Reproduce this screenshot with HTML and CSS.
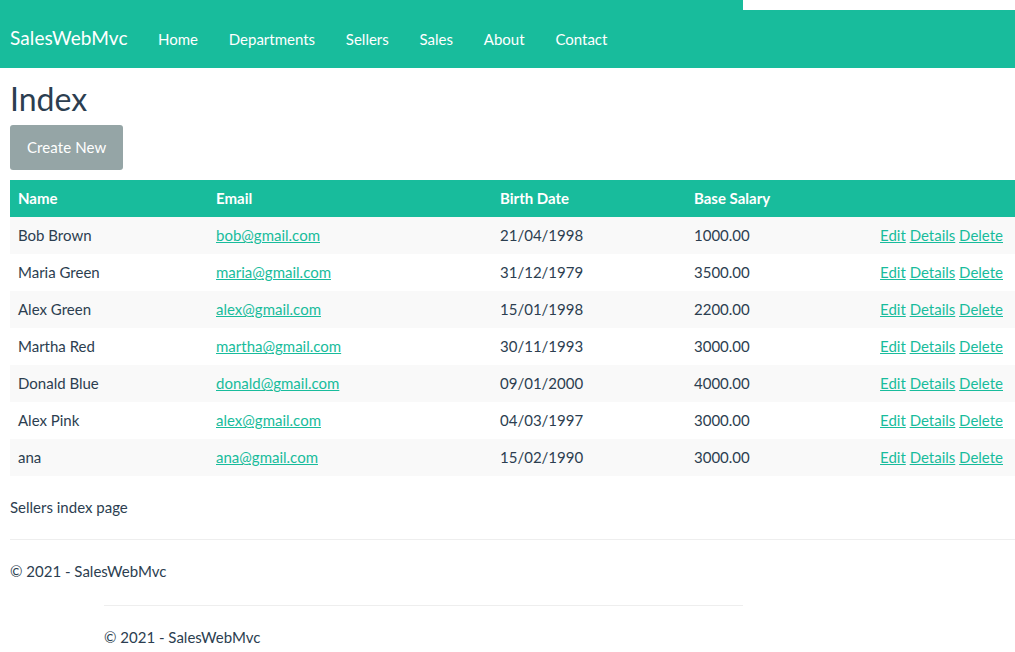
FILE: index.html
```html
<!DOCTYPE html>
<html lang="en">
<head>
<meta charset="utf-8">
<title>Index - SalesWebMvc</title>
<link rel="stylesheet" href="styles.css">
</head>
<body>
<nav class="navbar">
  <a class="brand" href="#">SalesWebMvc</a>
  <ul class="nav">
    <li><a href="#">Home</a></li>
    <li><a href="#">Departments</a></li>
    <li><a href="#">Sellers</a></li>
    <li><a href="#">Sales</a></li>
    <li><a href="#">About</a></li>
    <li><a href="#">Contact</a></li>
  </ul>
  <div class="notch"></div>
</nav>
<main class="container">
  <h2 class="title">Index</h2>
  <a class="btn" href="#">Create New</a>
  <table class="table">
    <colgroup>
      <col class="c1"><col class="c2"><col class="c3"><col class="c4"><col class="c5">
    </colgroup>
    <thead>
      <tr><th>Name</th><th>Email</th><th>Birth Date</th><th>Base Salary</th><th></th></tr>
    </thead>
    <tbody>
      <tr><td>Bob Brown</td><td><a href="#">bob@gmail.com</a></td><td>21/04/1998</td><td>1000.00</td><td class="actions"><a href="#">Edit</a> <a href="#">Details</a> <a href="#">Delete</a></td></tr>
      <tr><td>Maria Green</td><td><a href="#">maria@gmail.com</a></td><td>31/12/1979</td><td>3500.00</td><td class="actions"><a href="#">Edit</a> <a href="#">Details</a> <a href="#">Delete</a></td></tr>
      <tr><td>Alex Green</td><td><a href="#">alex@gmail.com</a></td><td>15/01/1998</td><td>2200.00</td><td class="actions"><a href="#">Edit</a> <a href="#">Details</a> <a href="#">Delete</a></td></tr>
      <tr><td>Martha Red</td><td><a href="#">martha@gmail.com</a></td><td>30/11/1993</td><td>3000.00</td><td class="actions"><a href="#">Edit</a> <a href="#">Details</a> <a href="#">Delete</a></td></tr>
      <tr><td>Donald Blue</td><td><a href="#">donald@gmail.com</a></td><td>09/01/2000</td><td>4000.00</td><td class="actions"><a href="#">Edit</a> <a href="#">Details</a> <a href="#">Delete</a></td></tr>
      <tr><td>Alex Pink</td><td><a href="#">alex@gmail.com</a></td><td>04/03/1997</td><td>3000.00</td><td class="actions"><a href="#">Edit</a> <a href="#">Details</a> <a href="#">Delete</a></td></tr>
      <tr><td>ana</td><td><a href="#">ana@gmail.com</a></td><td>15/02/1990</td><td>3000.00</td><td class="actions"><a href="#">Edit</a> <a href="#">Details</a> <a href="#">Delete</a></td></tr>
    </tbody>
  </table>
  <p class="note">Sellers index page</p>
  <hr class="rule">
  <footer class="footer"><p>&copy; 2021 - SalesWebMvc</p></footer>
</main>
<div class="footer2">
  <hr class="rule">
  <footer class="footer"><p>&copy; 2021 - SalesWebMvc</p></footer>
</div>
</body>
</html>
```
FILE: styles.css
```css
html, body {
  margin: 0;
  padding: 0;
}
body {
  font-family: Lato, "Open Sans", "Liberation Sans", sans-serif;
  font-size: 15px;
  line-height: 1.428571;
  color: #2c3e50;
  background: #fff;
}
a {
  color: #18bc9c;
}
.navbar {
  position: relative;
  display: flex;
  align-items: baseline;
  height: 68px;
  box-sizing: border-box;
  padding: 24px 0 0 10px;
  background: #18bc9c;
}
.brand {
  font-size: 19px;
  color: #fff;
  text-decoration: none;
  padding-right: 15px;
  letter-spacing: 0.1px;
}
.nav {
  display: flex;
  align-items: baseline;
  list-style: none;
  margin: 0;
  padding: 0;
}
.nav a {
  display: block;
  padding: 0 15.4px;
  color: #fff;
  text-decoration: none;
}
.notch {
  position: absolute;
  top: 0;
  left: 743px;
  right: 0;
  height: 10px;
  background: #fff;
}
.container {
  padding: 0 0 0 10px;
}
.title {
  font-size: 32px;
  font-weight: 400;
  line-height: 1.1;
  margin: 13px 0 9px;
}
.btn {
  display: inline-block;
  padding: 12px 17px 12px 17px;
  background: #95a5a6;
  color: #fff;
  text-decoration: none;
  border-radius: 3px;
  line-height: 21px;
  letter-spacing: 0.1px;
}
.table {
  width: 1005px;
  margin-top: 10px;
  border-collapse: collapse;
  table-layout: fixed;
}
.c1 { width: 198px; }
.c2 { width: 284px; }
.c3 { width: 194px; }
.c4 { width: 186px; }
.c5 { width: 143px; }
.table th,
.table td {
  padding: 8px;
  text-align: left;
  line-height: 21px;
  white-space: nowrap;
}
.table thead th {
  background: #18bc9c;
  color: #fff;
  font-weight: 700;
}
.table tbody tr:nth-child(odd) {
  background: #f9f9f9;
}
.table td.actions {
  text-align: right;
  padding-right: 12px;
}
.note {
  margin: 21px 0 0;
}
.rule {
  border: 0;
  border-top: 1px solid #eee;
  margin: 20px 0 0;
}
.footer p {
  margin: 21px 0 0;
}
.footer2 {
  width: 639px;
  margin-left: 104px;
  padding-top: 1px;
}
.footer2 .rule {
  margin-top: 22px;
}
.footer2 .footer p {
  margin-top: 21px;
}
```
